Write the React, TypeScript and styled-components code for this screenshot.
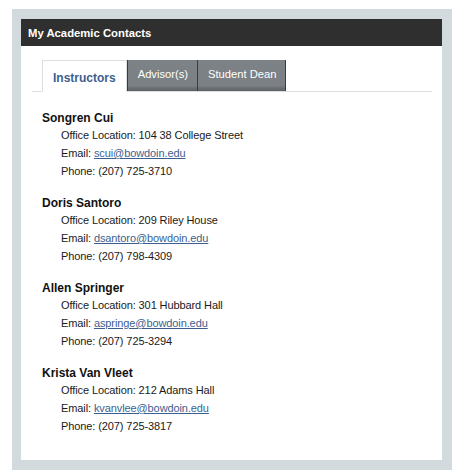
import React, { useState } from "react";
import styled, { createGlobalStyle } from "styled-components";

const Global = createGlobalStyle`
  html, body { margin: 0; padding: 0; background: #ffffff; }
  body { font-family: "Liberation Sans", Arial, sans-serif; }
`;

const Outer = styled.div`
  margin: 9px 0 0 12px;
  width: 440px;
  height: 461px;
  box-sizing: border-box;
  padding: 10px 10px 10px 9px;
  background: #d3dadd;
`;

const Panel = styled.section`
  height: 100%;
  background: #ffffff;
  display: flex;
  flex-direction: column;
  overflow: hidden;
`;

const Header = styled.h2`
  margin: 0;
  flex: 0 0 27px;
  background: #2f2f2f;
  color: #ffffff;
  font-size: 11.3px;
  font-weight: bold;
  display: flex;
  align-items: center;
  padding-left: 7px;
`;

const Body = styled.div`
  padding: 14px 10px 0 11px;
`;

const TabBar = styled.div`
  display: flex;
  align-items: flex-end;
  padding-left: 10px;
  border-bottom: 1px solid #dcdfe1;
  height: 31px;
`;

const Tab = styled.button<{ $active: boolean }>`
  height: ${(p) => (p.$active ? "32px" : "31px")};
  margin-bottom: ${(p) => (p.$active ? "-1px" : "0")};
  box-sizing: border-box;
  padding: ${(p) => (p.$active ? "3px 10px 0 10px" : "0 9px 3px 10px")};
  font-family: "Liberation Sans", Arial, sans-serif;
  font-size: ${(p) => (p.$active ? "12px" : "11.2px")};
  font-weight: ${(p) => (p.$active ? "bold" : "normal")};
  color: ${(p) => (p.$active ? "#3d5f8f" : "#ffffff")};
  background: ${(p) =>
    p.$active ? "#ffffff" : "linear-gradient(#7d8286 0%, #7b8084 82%, #5c6063 100%)"};
  border: ${(p) => (p.$active ? "1px solid #dcdfe1" : "none")};
  border-bottom: ${(p) => (p.$active ? "1px solid #ffffff" : "none")};
  border-left: ${(p) => (p.$active ? "1px solid #dcdfe1" : "1px solid #3a3c3e")};
  cursor: pointer;
  &:first-child { border-left: 1px solid #dcdfe1; }
  &:last-child { border-right: ${(p) => (p.$active ? "1px solid #dcdfe1" : "1px solid #3a3c3e")}; }
`;

const List = styled.div`
  padding: 18px 0 0 10px;
  display: flex;
  flex-direction: column;
  gap: 15px;
`;

const Contact = styled.div`
  display: flex;
  flex-direction: column;
`;

const Name = styled.div`
  font-size: 12px;
  font-weight: bold;
  color: #111;
  line-height: 16px;
`;

const Line = styled.div`
  padding-left: 19px;
  font-size: 11px;
  line-height: 18px;
  color: #1a1a1a;
  letter-spacing: -0.1px;
`;

const Mail = styled.a`
  color: #3d5f8f;
  text-decoration: underline;
`;

const contacts = [
  { name: "Songren Cui", office: "104 38 College Street", email: "scui@bowdoin.edu", phone: "(207) 725-3710" },
  { name: "Doris Santoro", office: "209 Riley House", email: "dsantoro@bowdoin.edu", phone: "(207) 798-4309" },
  { name: "Allen Springer", office: "301 Hubbard Hall", email: "aspringe@bowdoin.edu", phone: "(207) 725-3294" },
  { name: "Krista Van Vleet", office: "212 Adams Hall", email: "kvanvlee@bowdoin.edu", phone: "(207) 725-3817" },
];

const tabs = ["Instructors", "Advisor(s)", "Student Dean"];

export default function App() {
  const [active, setActive] = useState(0);
  return (
    <>
      <Global />
      <Outer>
        <Panel>
          <Header>My Academic Contacts</Header>
          <Body>
            <TabBar>
              {tabs.map((t, i) => (
                <Tab key={t} $active={i === active} onClick={() => setActive(i)}>
                  {t}
                </Tab>
              ))}
            </TabBar>
            <List>
              {contacts.map((c) => (
                <Contact key={c.name}>
                  <Name>{c.name}</Name>
                  <Line>Office Location: {c.office}</Line>
                  <Line>
                    Email: <Mail href={`mailto:${c.email}`}>{c.email}</Mail>
                  </Line>
                  <Line>Phone: {c.phone}</Line>
                </Contact>
              ))}
            </List>
          </Body>
        </Panel>
      </Outer>
    </>
  );
}
